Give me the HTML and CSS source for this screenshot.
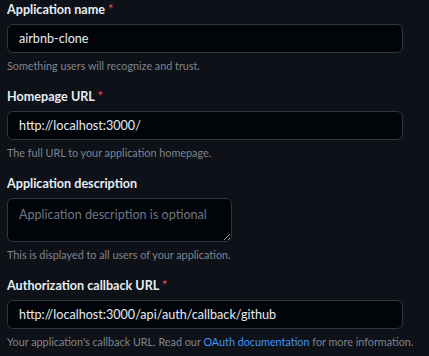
FILE: index.html
```html
<!DOCTYPE html>
<html lang="en">
<head>
    <meta charset="UTF-8">
    <meta name="viewport" content="width=device-width, initial-scale=1.0">
    <title>Register a new OAuth application</title>
    <link rel="stylesheet" href="styles.css">
</head>
<body>
    <form class="oauth-form">
        <div class="form-group">
            <label class="form-label" for="app-name">Application name <span class="required">*</span></label>
            <input class="form-control" id="app-name" type="text" value="airbnb-clone">
            <p class="note">Something users will recognize and trust.</p>
        </div>

        <div class="form-group">
            <label class="form-label" for="homepage">Homepage URL <span class="required">*</span></label>
            <input class="form-control" id="homepage" type="text" value="http://localhost:3000/">
            <p class="note">The full URL to your application homepage.</p>
        </div>

        <div class="form-group">
            <label class="form-label" for="description">Application description</label>
            <textarea class="form-control textarea" id="description" placeholder="Application description is optional"></textarea>
            <p class="note">This is displayed to all users of your application.</p>
        </div>

        <div class="form-group">
            <label class="form-label" for="callback">Authorization callback URL <span class="required">*</span></label>
            <input class="form-control" id="callback" type="text" value="http://localhost:3000/api/auth/callback/github">
            <p class="note">Your application's callback URL. Read our <a href="#">OAuth documentation</a> for more information.</p>
        </div>
    </form>
</body>
</html>
```

FILE: styles.css
```css
html {
    color-scheme: dark;
}
body {
    margin: 0;
    padding: 0 7px;
    background: #0e1117;
    font-family: Lato, "Liberation Sans", sans-serif;
    color: #e6edf3;
}
.oauth-form {
    width: 415px;
}
.form-group {
    margin-bottom: 12px;
}
.form-label {
    display: block;
    font-size: 12.6px;
    font-weight: 700;
    line-height: 20px;
    margin-bottom: 4px;
    color: #e6edf3;
}
.required {
    color: #f85149;
    font-weight: 400;
}
.form-control {
    display: block;
    box-sizing: border-box;
    width: 396px;
    height: 29px;
    padding: 0 11px;
    background: #010409;
    border: 1px solid #30363d;
    border-radius: 6px;
    color: #e6edf3;
    font-family: inherit;
    font-size: 12.6px;
    outline: none;
}
.textarea {
    width: 225px;
    height: 44px;
    padding: 7px 11px;
    line-height: 18px;
    resize: vertical;
}
.textarea::placeholder {
    color: #6e7681;
}
.note {
    margin: 4px 0 0;
    font-size: 10.8px;
    line-height: 18px;
    color: #7d8590;
    white-space: nowrap;
}
.note a {
    color: #4493f8;
    text-decoration: none;
}
```
